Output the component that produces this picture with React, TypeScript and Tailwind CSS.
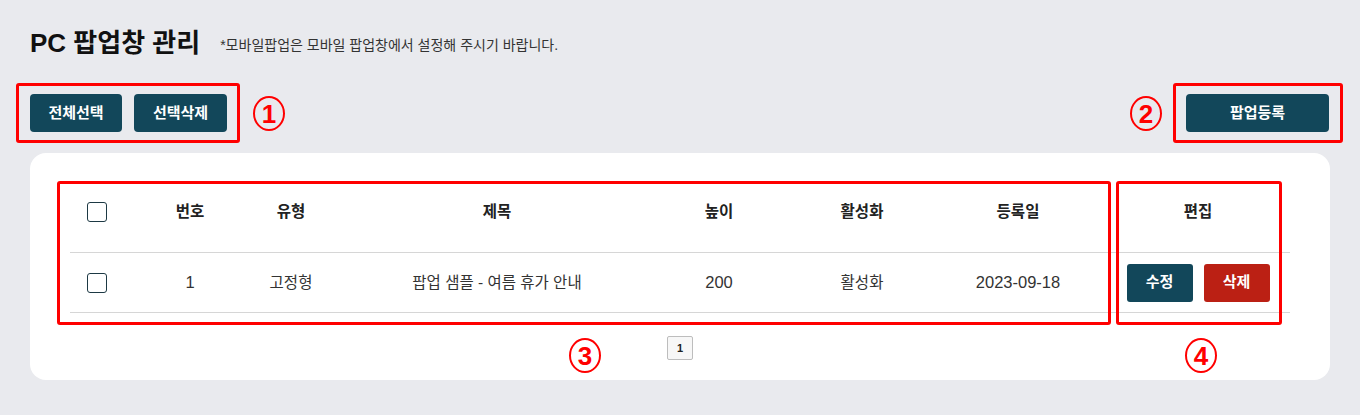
import React from "react";

const font = { fontFamily: '"Liberation Sans", "Noto Sans CJK KR", sans-serif' };

const cols = "grid-cols-[78px_84px_118px_294px_150px_136px_176px_184px]";

function Checkbox() {
  return <span className="block h-[20px] w-[20px] rounded-[3px] border-[1.5px] border-[#1d3944] bg-white" />;
}

function Mark({ n, className }: { n: string; className: string }) {
  return (
    <span
      className={`absolute flex h-[35px] w-[32px] items-center justify-center rounded-[50%] border-2 border-[#ff0000] text-[26px] font-bold leading-none text-[#ff0000] ${className}`}
    >
      {n}
    </span>
  );
}

function Box({ className }: { className: string }) {
  return <div className={`pointer-events-none absolute rounded-[3px] border-[3px] border-[#ff0000] ${className}`} />;
}

export default function App() {
  return (
    <div className="relative min-h-screen bg-[#e9eaee] px-[30px] pt-[26px]" style={font}>
      {/* header */}
      <div className="flex items-end gap-[20px]">
        <h1 className="text-[26px] font-bold leading-[34px] text-[#111]">PC 팝업창 관리</h1>
        <p className="pb-[4px] text-[14px] text-[#333]">*모바일팝업은 모바일 팝업창에서 설정해 주시기 바랍니다.</p>
      </div>

      {/* toolbar */}
      <div className="mt-[34px] flex items-center justify-between pr-[1px]">
        <div className="flex gap-[12px]">
          <button className="h-[38px] w-[92px] rounded-[4px] bg-[#12475a] text-[15px] font-bold text-white">전체선택</button>
          <button className="h-[38px] w-[93px] rounded-[4px] bg-[#12475a] text-[15px] font-bold text-white">선택삭제</button>
        </div>
        <button className="h-[38px] w-[143px] rounded-[4px] bg-[#12475a] text-[15px] font-bold text-white">팝업등록</button>
      </div>

      {/* card */}
      <div className="mt-[21px] rounded-[16px] bg-white px-[40px] pb-[20px] pt-[28px]">
        <div className={`grid ${cols} h-[72px] items-center border-b border-[#d6d6d6] pb-[10px] text-[15.5px] font-bold text-[#222]`}>
          <div className="pl-[17px]"><Checkbox /></div>
          <div className="text-center">번호</div>
          <div className="text-center">유형</div>
          <div className="text-center">제목</div>
          <div className="text-center">높이</div>
          <div className="text-center">활성화</div>
          <div className="text-center">등록일</div>
          <div className="text-center">편집</div>
        </div>
        <div className={`grid ${cols} h-[60px] items-center border-b border-[#d6d6d6] text-[15.5px] text-[#333]`}>
          <div className="pl-[17px]"><Checkbox /></div>
          <div className="text-center text-[16.5px]">1</div>
          <div className="text-center">고정형</div>
          <div className="text-center">팝업 샘플 - 여름 휴가 안내</div>
          <div className="text-center text-[16.5px]">200</div>
          <div className="text-center">활성화</div>
          <div className="text-center text-[16.5px]">2023-09-18</div>
          <div className="flex justify-center gap-[11px]">
            <button className="h-[38px] w-[66px] rounded-[3px] bg-[#12475a] text-[15px] font-bold text-white">수정</button>
            <button className="h-[38px] w-[66px] rounded-[3px] bg-[#bb2014] text-[15px] font-bold text-white">삭제</button>
          </div>
        </div>
        <div className="mt-[23px] flex justify-center">
          <span className="flex h-[24px] w-[26px] items-center justify-center rounded-[2px] border border-[#bdbdbd] bg-[#f7f7f7] text-[11px] font-bold text-[#222]">1</span>
        </div>
      </div>

      {/* annotations */}
      <Box className="left-[16px] top-[83px] h-[60px] w-[224px]" />
      <Box className="left-[1173px] top-[83px] h-[60px] w-[170px]" />
      <Box className="left-[57px] top-[181px] h-[144px] w-[1054px]" />
      <Box className="left-[1116px] top-[181px] h-[144px] w-[166px]" />
      <Mark n="1" className="left-[253px] top-[96px]" />
      <Mark n="2" className="left-[1130px] top-[96px]" />
      <Mark n="3" className="left-[569px] top-[338px]" />
      <Mark n="4" className="left-[1185px] top-[338px]" />
    </div>
  );
}
